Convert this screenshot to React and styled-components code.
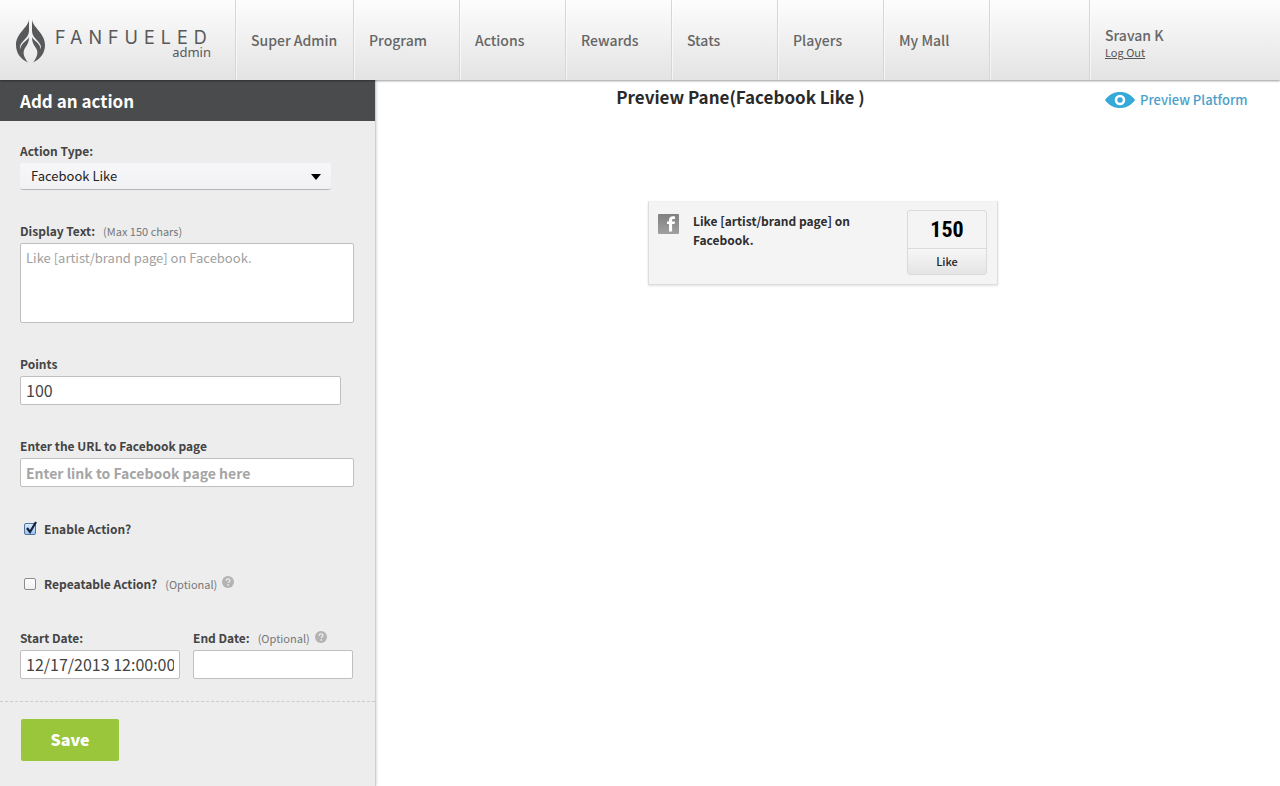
import React, { useState } from 'react';
import styled, { createGlobalStyle } from 'styled-components';

const GlobalStyle = createGlobalStyle`
  * {
    box-sizing: border-box;
  }

  body {
    margin: 0;
    background: #fff;
    color: #444;
    font-family: 'Noto Sans CJK SC', 'Open Sans', sans-serif;
    font-size: 13px;
    line-height: 20px;
  }

  button, input, select, textarea {
    font-family: inherit;
    margin: 0;
  }
`;

const Header = styled.header`
  position: relative;
  display: flex;
  height: 80px;
  background: linear-gradient(#fdfdfd, #e3e3e3);
  box-shadow: 0 1px 2px rgba(0, 0, 0, 0.4);
`;

const Brand = styled.a`
  display: flex;
  flex: 0 0 235px;
  align-items: flex-start;
  gap: 9px;
  padding: 18px 0 0 15px;
  color: #58595b;
  text-decoration: none;
`;

const BrandText = styled.span`
  display: flex;
  flex-direction: column;
  width: 156px;
  padding-top: 10px;
`;

const Wordmark = styled.span`
  font-family: Inter, sans-serif;
  font-size: 18px;
  font-weight: 400;
  line-height: 20px;
  letter-spacing: 6px;
  white-space: nowrap;
`;

const BrandSub = styled.span`
  align-self: flex-end;
  font-family: 'Noto Sans', sans-serif;
  font-size: 13px;
  line-height: 8px;
`;

const Nav = styled.nav`
  display: flex;
`;

const NavItem = styled.a`
  display: flex;
  align-items: center;
  width: ${({ $wide }) => ($wide ? '118px' : '106px')};
  padding-left: 15px;
  border-left: 1px solid #d6d6d6;
  box-shadow: inset 1px 0 0 rgba(255, 255, 255, 0.6);
  color: #666;
  font-size: 14px;
  font-weight: 500;
  text-decoration: none;
  white-space: nowrap;
`;

const NavSpacer = styled.div`
  width: 100px;
  border-left: 1px solid #d6d6d6;
  box-shadow: inset 1px 0 0 rgba(255, 255, 255, 0.6);
`;

const Account = styled.div`
  display: flex;
  flex: 1;
  flex-direction: column;
  align-items: flex-start;
  padding: 25px 0 0 15px;
  border-left: 1px solid #d6d6d6;
  box-shadow: inset 1px 0 0 rgba(255, 255, 255, 0.6);
  color: #666;
  font-size: 14px;
  font-weight: 500;

  a {
    color: #555;
    font-size: 11px;
    font-weight: 400;
    line-height: 14px;
  }
`;

const Page = styled.div`
  display: flex;
  min-height: calc(100vh - 80px);
`;

const Sidebar = styled.aside`
  flex: 0 0 376px;
  background: #ededed;
  border-right: 1px solid #d0d0d0;
  box-shadow: 1px 0 2px rgba(0, 0, 0, 0.12);
`;

const SidebarTitle = styled.h1`
  margin: 0;
  padding-left: 20px;
  background: #4a4b4c;
  color: #fff;
  font-size: 17px;
  font-weight: 700;
  line-height: 41px;
`;

const Fields = styled.div`
  display: flex;
  flex-direction: column;
  gap: 29px;
  padding: 18px 20px 22px;
`;

const Field = styled.div`
  display: flex;
  flex-direction: column;
  align-items: flex-start;
`;

const LabelRow = styled.div`
  display: flex;
  align-items: center;
  gap: 8px;
  height: 24px;
`;

const Label = styled.label`
  color: #444;
  font-size: 12px;
  font-weight: 700;
`;

const Hint = styled.span`
  color: #777;
  font-size: 11px;
`;

const SelectWrap = styled.div`
  position: relative;
  width: 311px;

  svg {
    position: absolute;
    top: 11px;
    right: 10px;
    pointer-events: none;
  }
`;

const Select = styled.select`
  display: block;
  width: 100%;
  height: 27px;
  padding: 0 30px 2px 11px;
  appearance: none;
  background: linear-gradient(#f7f7f9, #f2f2f5);
  border: 0;
  border-bottom: 1px solid #b4b4be;
  border-radius: 3px;
  color: #222;
  font-size: 13px;
`;

const TextArea = styled.textarea`
  display: block;
  width: 334px;
  height: 80px;
  padding: 4px 5px;
  background: #fff;
  border: 1px solid #c0c0c0;
  border-radius: 2px;
  color: #444;
  font-size: 13px;
  line-height: 20px;
  resize: none;

  &::placeholder {
    color: #a0a0a0;
  }
`;

const Input = styled.input`
  display: block;
  width: ${({ $width }) => $width};
  height: 29px;
  padding: 0 5px 2px;
  background: #fff;
  border: 1px solid #c0c0c0;
  border-radius: 2px;
  color: #444;
  font-size: 16px;

  &::placeholder {
    color: #a5a5a5;
    font-size: 14px;
    font-weight: 700;
  }
`;

const CheckRow = styled.div`
  display: flex;
  align-items: center;
  gap: 8px;
  height: 26px;
  padding-left: 4px;
`;

const CheckWrap = styled.span`
  position: relative;
  width: 12px;
  height: 12px;

  svg {
    position: absolute;
    top: -2px;
    left: 0;
    pointer-events: none;
  }
`;

const Checkbox = styled.input`
  display: block;
  width: 12px;
  height: 12px;
  appearance: none;
  background: linear-gradient(#fff, #f0f0f0);
  border: 1px solid #8d8d8d;
  border-radius: 2px;

  &:checked {
    background: linear-gradient(#dcebfa, #9cc5ee);
    border-color: #54719c;
  }
`;

const HelpButton = styled.button`
  display: flex;
  align-self: flex-start;
  margin-left: -3px;
  padding: 5px 0 0;
  background: none;
  border: 0;
  cursor: pointer;
`;

const DateRow = styled.div`
  display: flex;
  gap: 13px;
`;

const Actions = styled.div`
  padding: 17px 21px 25px;
  border-top: 1px dashed #ccc;
`;

const SaveButton = styled.button`
  width: 98px;
  height: 42px;
  padding: 0 0 2px;
  background: #9ac63c;
  border: 0;
  border-radius: 2px;
  color: #fff;
  font-size: 16px;
  font-weight: 900;
  cursor: pointer;
`;

const Main = styled.main`
  flex: 1;
  min-width: 0;
`;

const PreviewBar = styled.div`
  display: flex;
  align-items: flex-start;
`;

const PreviewTitle = styled.h2`
  flex: 1;
  margin: 0;
  padding-top: 4px;
  color: #2a2a2a;
  font-size: 17px;
  font-weight: 700;
  line-height: 26px;
  text-align: center;
`;

const PreviewLink = styled.a`
  display: flex;
  flex: 0 0 175px;
  align-items: center;
  gap: 5px;
  padding-top: 10px;
  color: #4a9fcb;
  font-size: 13px;
  font-weight: 500;
  text-decoration: none;
`;

const Card = styled.article`
  display: flex;
  align-items: flex-start;
  width: 350px;
  height: 84px;
  margin: 91px auto 0;
  padding: 8px 10px 8px 9px;
  background: #f4f4f5;
  border: 1px solid #dedede;
  border-top-color: #f0f0f0;
  box-shadow: 0 1px 2px rgba(0, 0, 0, 0.12);
`;

const CardArea = styled.div`
  padding-right: 10px;
`;

const CardIcon = styled.span`
  display: flex;
  padding-top: 4px;
`;

const CardText = styled.p`
  flex: 1;
  margin: 0;
  padding: 1px 40px 0 14px;
  color: #2e2e2e;
  font-size: 12px;
  font-weight: 700;
  line-height: 19px;
`;

const Score = styled.div`
  display: flex;
  flex-direction: column;
  width: 80px;
  border: 1px solid #d9d9de;
  border-radius: 3px;
  overflow: hidden;
`;

const ScoreValue = styled.span`
  height: 37px;
  color: #000;
  font-family: 'Roboto Condensed', Roboto, sans-serif;
  font-size: 22px;
  font-weight: 700;
  line-height: 38px;
  text-align: center;
`;

const LikeButton = styled.button`
  height: 26px;
  padding: 0 0 2px;
  background: linear-gradient(#f7f7f7, #e4e4e4);
  border: 0;
  border-top: 1px solid #d9d9de;
  color: #222;
  font-size: 11px;
  font-weight: 500;
  cursor: pointer;
`;

const flameHalf =
  'M14 1C14 9 1 15 1 27c0 8 4.500 14 12 17.500C9 39.500 7.500 35 9.500 31c1.500-3 4.500-5 4.500-12-1.500 4-7.500 5-9 12.500C3.500 23.500 14 21 14 13z';

function FlameLogo() {
  return (
    <svg width="31" height="46" viewBox="0 0 31 46" fill="#58595b" aria-hidden="true">
      <path d={flameHalf} />
      <path d={flameHalf} transform="matrix(-1 0 0 1 31 0)" />
    </svg>
  );
}

function EyeIcon() {
  return (
    <svg width="30" height="18" viewBox="0 0 30 18" aria-hidden="true">
      <path d="M0 9C4 3.500 9 1 15 1s11 2.500 15 8c-4 5.500-9 8-15 8S4 14.500 0 9z" fill="#35a9d8" />
      <circle cx="15" cy="9" r="4" fill="#35a9d8" stroke="#fff" strokeWidth="2.600" />
    </svg>
  );
}

function FacebookIcon() {
  return (
    <svg width="21" height="21" viewBox="0 0 21 21" aria-hidden="true">
      <defs>
        <linearGradient id="fb" x1="0" y1="0" x2="0" y2="1">
          <stop offset="0" stopColor="#808080" />
          <stop offset="1" stopColor="#a0a0a0" />
        </linearGradient>
      </defs>
      <rect width="21" height="20" rx="1" fill="url(#fb)" />
      <path d="M11 17.500V10H9V7.500h2V6.200c0-2.600 1.500-3.900 3.900-3.900.9 0 1.700.1 2.100.2v2.600h-1.400c-1.200 0-1.500.5-1.500 1.300v1.100H17L16.600 10h-2.500v7.500z" fill="#fff" />
    </svg>
  );
}

function HelpIcon() {
  return (
    <svg width="12" height="12" viewBox="0 0 12 12" aria-hidden="true">
      <circle cx="6" cy="6" r="6" fill="#b3b3b3" />
      <path d="M4.200 4.700c0-1.100.8-1.800 1.900-1.800s1.900.7 1.900 1.600c0 1.200-1.700 1.300-1.700 2.500" fill="none" stroke="#ededed" strokeWidth="1.300" />
      <circle cx="6.200" cy="8.900" r=".9" fill="#ededed" />
    </svg>
  );
}

function Check({ id, checked, onChange }) {
  return (
    <CheckWrap>
      <Checkbox id={id} type="checkbox" checked={checked} onChange={onChange} />
      {checked && (
        <svg width="14" height="13" viewBox="0 0 14 13" aria-hidden="true">
          <path d="M3 7l3 4L12 1" fill="none" stroke="#14203f" strokeWidth="2.200" />
        </svg>
      )}
    </CheckWrap>
  );
}

const navItems = ['Super Admin', 'Program', 'Actions', 'Rewards', 'Stats', 'Players', 'My Mall'];

export default function App() {
  const [enabled, setEnabled] = useState(true);
  const [repeatable, setRepeatable] = useState(false);

  return (
    <>
      <GlobalStyle />
      <Header>
        <Brand href="#">
          <FlameLogo />
          <BrandText>
            <Wordmark>FANFUELED</Wordmark>
            <BrandSub>admin</BrandSub>
          </BrandText>
        </Brand>
        <Nav>
          {navItems.map((item, i) => (
            <NavItem key={item} href="#" $wide={i === 0}>{item}</NavItem>
          ))}
        </Nav>
        <NavSpacer />
        <Account>
          <span>Sravan K</span>
          <a href="#">Log Out</a>
        </Account>
      </Header>

      <Page>
        <Sidebar>
          <SidebarTitle>Add an action</SidebarTitle>
          <form onSubmit={(e) => e.preventDefault()}>
            <Fields>
              <Field>
                <LabelRow>
                  <Label htmlFor="type">Action Type:</Label>
                </LabelRow>
                <SelectWrap>
                  <Select id="type">
                    <option>Facebook Like</option>
                  </Select>
                  <svg width="10" height="6" viewBox="0 0 10 6" aria-hidden="true">
                    <path d="M0 0h10L5 6z" fill="#000" />
                  </svg>
                </SelectWrap>
              </Field>

              <Field>
                <LabelRow>
                  <Label htmlFor="display">Display Text:</Label>
                  <Hint>(Max 150 chars)</Hint>
                </LabelRow>
                <TextArea id="display" placeholder="Like [artist/brand page] on Facebook." />
              </Field>

              <Field>
                <LabelRow>
                  <Label htmlFor="points">Points</Label>
                </LabelRow>
                <Input id="points" type="text" defaultValue="100" $width="321px" />
              </Field>

              <Field>
                <LabelRow>
                  <Label htmlFor="url">Enter the URL to Facebook page</Label>
                </LabelRow>
                <Input id="url" type="text" placeholder="Enter link to Facebook page here" $width="334px" />
              </Field>

              <CheckRow>
                <Check id="enable" checked={enabled} onChange={(e) => setEnabled(e.target.checked)} />
                <Label htmlFor="enable">Enable Action?</Label>
              </CheckRow>

              <CheckRow>
                <Check id="repeat" checked={repeatable} onChange={(e) => setRepeatable(e.target.checked)} />
                <Label htmlFor="repeat">Repeatable Action?</Label>
                <Hint>(Optional)</Hint>
                <HelpButton type="button" aria-label="About repeatable actions"><HelpIcon /></HelpButton>
              </CheckRow>

              <DateRow>
                <Field>
                  <LabelRow>
                    <Label htmlFor="start">Start Date:</Label>
                  </LabelRow>
                  <Input id="start" type="text" defaultValue="12/17/2013 12:00:00" $width="160px" />
                </Field>
                <Field>
                  <LabelRow>
                    <Label htmlFor="end">End Date:</Label>
                    <Hint>(Optional)</Hint>
                    <HelpButton type="button" aria-label="About the end date"><HelpIcon /></HelpButton>
                  </LabelRow>
                  <Input id="end" type="text" $width="160px" />
                </Field>
              </DateRow>
            </Fields>

            <Actions>
              <SaveButton type="submit">Save</SaveButton>
            </Actions>
          </form>
        </Sidebar>

        <Main>
          <PreviewBar>
            <PreviewTitle>Preview Pane(Facebook Like )</PreviewTitle>
            <PreviewLink href="#">
              <EyeIcon />
              Preview Platform
            </PreviewLink>
          </PreviewBar>
          <CardArea>
            <Card>
              <CardIcon><FacebookIcon /></CardIcon>
              <CardText>Like [artist/brand page] on Facebook.</CardText>
              <Score>
                <ScoreValue>150</ScoreValue>
                <LikeButton type="button">Like</LikeButton>
              </Score>
            </Card>
          </CardArea>
        </Main>
      </Page>
    </>
  );
}
